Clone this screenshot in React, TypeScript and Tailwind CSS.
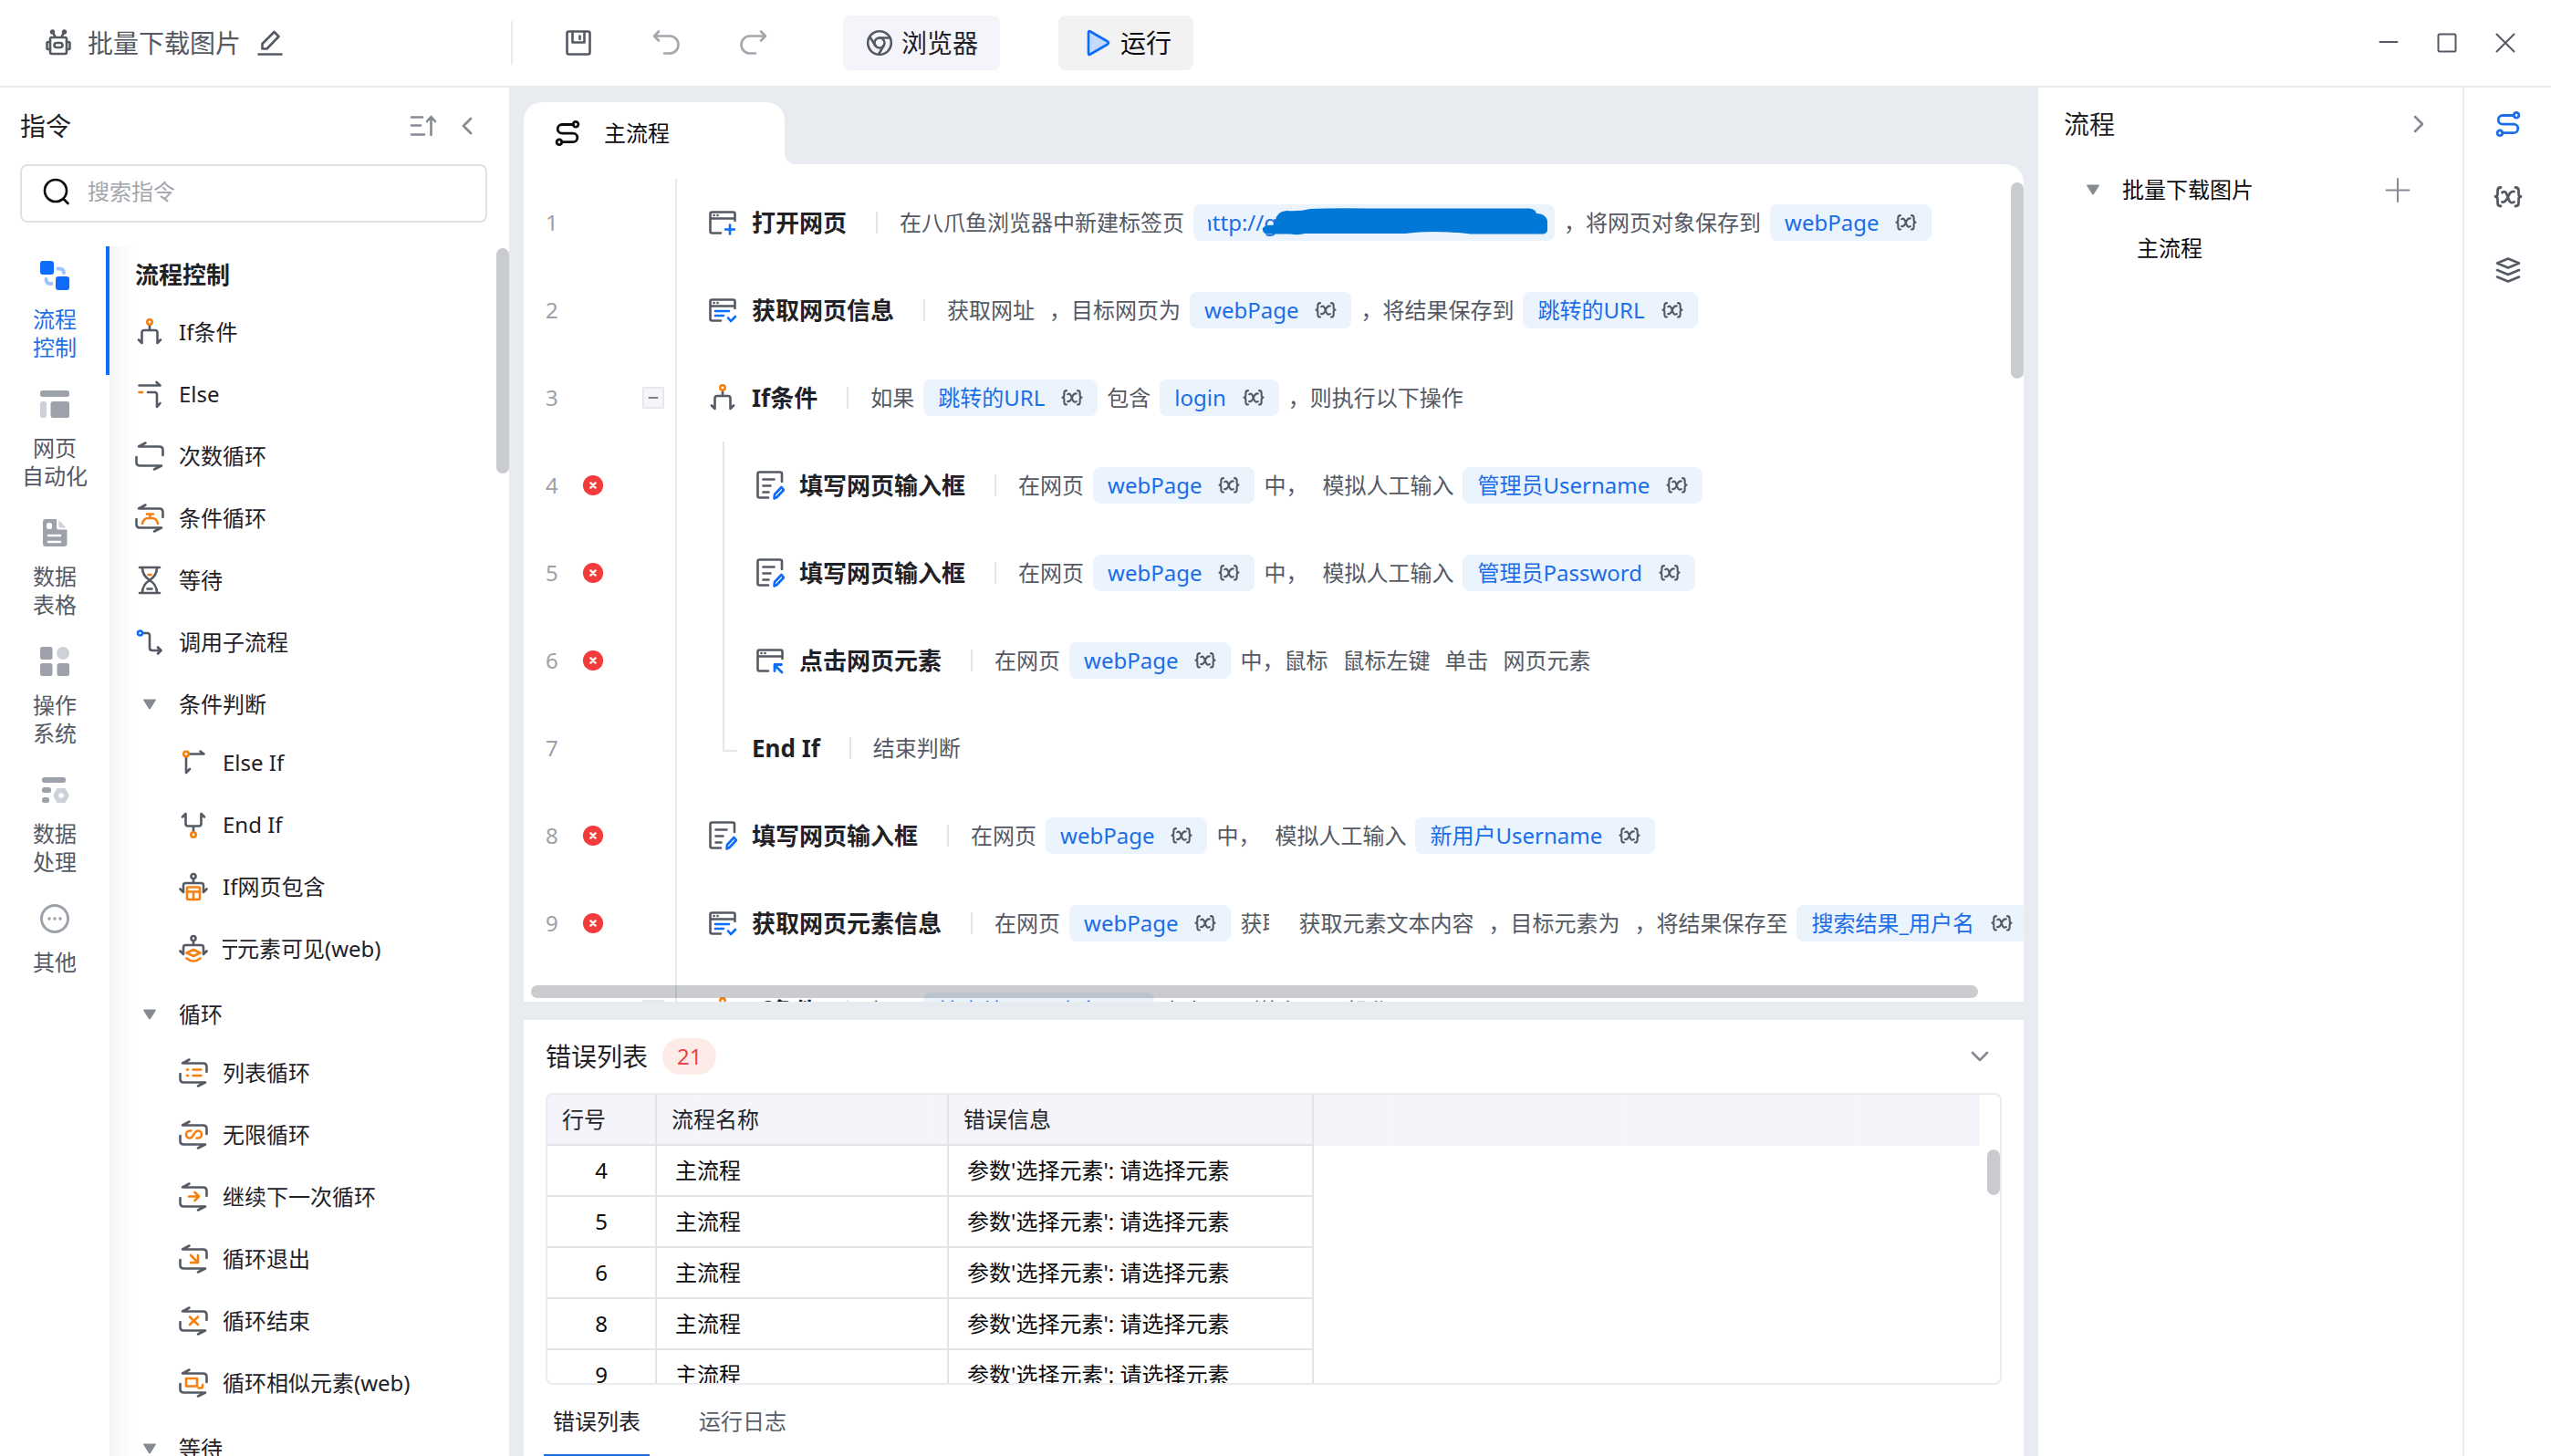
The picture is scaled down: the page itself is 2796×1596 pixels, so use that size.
import type { ReactNode } from 'react';
import { ChevronDown, ChevronLeft, ChevronRight, Minus } from 'lucide-react';

const GREY = '#545964';
const ORANGE = '#f77f0e';
const BLUE = '#0d6cf9';

type IconProps = { className?: string; children?: ReactNode };

function Svg({ className = 'size-8', children }: IconProps) {
  return (
    <svg
      viewBox="0 0 32 32"
      className={`shrink-0 ${className}`}
      fill="none"
      stroke={GREY}
      strokeWidth="2.6"
      strokeLinecap="round"
      strokeLinejoin="round"
      aria-hidden="true"
    >
      {children}
    </svg>
  );
}

/* ---------- header icons ---------- */

const RobotIcon = () => (
  <Svg>
    <rect x="7" y="10" width="18" height="18" rx="2" />
    <rect x="11.5" y="16" width="9" height="5" rx="2.5" />
    <path d="M7 15H4.5q-1 0-1 1v6q0 1 1 1H7M25 15h2.500q1 0 1 1v6q0 1-1 1H25M10 4.500l2.500 5M22 4.500l-2.500 5" />
    <circle cx="9.500" cy="4" r="1.400" fill={GREY} />
    <circle cx="22.500" cy="4" r="1.400" fill={GREY} />
  </Svg>
);

const PencilIcon = () => (
  <Svg>
    <path d="M3.500 28.500h25M7.500 22.500v-5.500L20.500 4l5 5L12.500 22.500z" />
  </Svg>
);

const SaveIcon = () => (
  <Svg>
    <rect x="3.500" y="3.500" width="25" height="25" rx="2" />
    <path d="M9.500 4v11.500h13V4M17.500 8.500v3.500" />
  </Svg>
);

const UndoIcon = () => (
  <Svg className="size-8 text-[#a3a6ad]">
    <path stroke="currentColor" d="M8 3.500L3 8.500l5 5M3.500 8.500H20a9 9 0 0 1 0 19h-6" />
  </Svg>
);

const RedoIcon = () => (
  <Svg className="size-8 text-[#a3a6ad]">
    <path stroke="currentColor" d="M24 3.500l5 5-5 5M28.500 8.500H12a9 9 0 0 0 0 19h6" />
  </Svg>
);

const BrowserIcon = () => (
  <Svg>
    <circle cx="16" cy="16" r="12.800" />
    <circle cx="16" cy="16" r="5.500" />
    <path d="M16 10.500h11.500M11.300 18.800L5.300 9.200M20.700 18.800L15 28.500" />
  </Svg>
);

const PlayIcon = () => (
  <Svg>
    <path d="M5 4.500q0-2 2-1L26 14.500q2 1.500 0 3L7 28.500q-2 1-2-1z" stroke={BLUE} fill="#c3dafd" />
  </Svg>
);

const FlowIcon = ({ color }: { color: string }) => (
  <Svg>
    <g stroke={color} strokeWidth="2.800">
      <path d="M22.500 6.500H10a4.800 4.800 0 0 0 0 9.600h12a4.800 4.800 0 0 1 0 9.600H9.500" />
      <circle cx="25" cy="6.200" r="2.900" />
      <circle cx="7" cy="25.800" r="2.900" />
    </g>
  </Svg>
);

const VarIcon = ({ className = 'size-6' }: IconProps) => (
  <Svg className={className}>
    <g strokeWidth="2.800">
      <path d="M8 5.500Q4.500 5.500 4.500 9v3Q4.500 15.500 2 15.500q2.500 0 2.500 3.500v3.500Q4.500 26 8 26M24 5.500q3.500 0 3.500 3.500v3q0 3.500 2.500 3.500-2.500 0-2.500 3.500v3.500q0 3.500-3.500 3.500" />
      <path d="M9.500 11Q13 8.500 14.500 13l2.500 6.500q1.500 4 5.500 2M22.500 10q-4-1-6.500 5.500T9.500 21.500" />
    </g>
  </Svg>
);

const LayersIcon = () => (
  <Svg>
    <path d="M16 3.500l12 5-12 5-12-5zM4 16l12 5 12-5M4 23.500l12 5 12-5" />
  </Svg>
);

const SortIcon = () => (
  <Svg>
    <path stroke="#868a93" d="M3 6.500h12M3 15.500h10M3 25.500h14M24.500 26V6.500M20 11l4.500-5L29 11" />
  </Svg>
);

/* ---------- command icons ---------- */

const ForkIcon = () => (
  <Svg>
    <path d="M16 9v5M7.500 28V16.500q0-2.500 2.500-2.500h12q2.500 0 2.500 2.500V28M7.500 28L4 24.500M24.500 28l3.500-3.500" />
    <circle cx="16" cy="5" r="2.700" stroke={ORANGE} />
  </Svg>
);

const ElseIcon = () => (
  <Svg>
    <path d="M4.500 6.500H27.500L23.500 3M14 14h7.500q2.500 0 2.500 2.500V30l3.500-4" />
    <path d="M4.500 14h3.500" stroke={ORANGE} />
  </Svg>
);

const LoopIcon = ({ children }: { children?: ReactNode }) => (
  <Svg>
    <path d="M11.500 1.500L4 5.500h22.500q4 0 4 4V15M1.500 17v5.500q0 4 4 4H29l-8 4" />
    <g stroke={ORANGE}>{children}</g>
  </Svg>
);

const WaitIcon = () => (
  <Svg>
    <path d="M5 2h22M5 30h22M8 2q0 9 8 14-8 5-8 14M24 2q0 9-8 14 8 5 8 14M13.500 25.500h5" />
    <path d="M14.500 10h3" stroke={ORANGE} />
  </Svg>
);

const SubflowIcon = () => (
  <Svg>
    <path d="M8.500 6h5q2.500 0 2.500 2.500V22q0 3 3 3h9.500M25 21.500l3.500 3.500-3.500 3.500" />
    <circle cx="5.500" cy="6" r="2.500" stroke={BLUE} />
  </Svg>
);

const ElseIfIcon = () => (
  <Svg>
    <path d="M11 6.500h16.500L23.500 3.500M8 10v17l4-4" />
    <circle cx="8" cy="6.500" r="2.700" stroke={ORANGE} />
  </Svg>
);

const EndIfIcon = () => (
  <Svg>
    <path d="M16 17.500V23M7.500 4v11q0 2.500 2.500 2.500h12q2.500 0 2.500-2.500V4M7.500 4L4 7.500M24.500 4L28 7.500" />
    <circle cx="16" cy="27" r="2.700" stroke={ORANGE} />
  </Svg>
);

const IfBoxIcon = ({ children }: { children: ReactNode }) => (
  <Svg>
    <path d="M16 7.500V12M5 22v-7.500q0-2.500 2.500-2.500h17q2.500 0 2.500 2.500V22M5 22l-3.500-3.500M27 22l3.500-3.500" />
    <circle cx="16" cy="4.500" r="2.500" />
    <g stroke={ORANGE}>{children}</g>
  </Svg>
);

const WindowBase = ({ children }: { children: ReactNode }) => (
  <Svg>
    <path d="M2.500 11.500h27M29.500 14V6.500q0-2-2-2h-23q-2 0-2 2v19q0 2 2 2H14M6.500 8h.1M10.500 8h.1" />
    <g stroke={BLUE}>{children}</g>
  </Svg>
);

const OpenPageIcon = () => (
  <WindowBase>
    <path d="M24 18.500v10M19 23.500h10" />
  </WindowBase>
);

const PageInfoIcon = () => (
  <WindowBase>
    <path d="M8 17h15M8 22h9M22 24.500l3 3.500 5-5" />
  </WindowBase>
);

const ClickIcon = () => (
  <WindowBase>
    <path strokeWidth="2.800" d="M29 29l-7-7M21 27.500v-7h7.500" />
  </WindowBase>
);

const FillIcon = () => (
  <Svg>
    <path d="M29 12V3.500q0-2-2-2H4.500q-2 0-2 2v24q0 2 2 2H14M8.500 9.500h12M8.500 16.500h8M8.500 23.500h6" />
    <path d="M20.500 30.500l.5-4.500 7.500-8 2.500 3-7.500 8z" stroke={BLUE} />
  </Svg>
);

const ErrorIcon = () => (
  <Svg className="size-6">
    <circle cx="16" cy="16" r="14.800" fill="#f23c3c" stroke="none" />
    <path d="M12.500 12.500l7 7M19.500 12.500l-7 7" stroke="#fff" strokeWidth="3" />
  </Svg>
);

const Triangle = () => (
  <svg viewBox="0 0 16 12" className="h-3 w-4 shrink-0" aria-hidden="true">
    <path d="M2 .5h12q1.500 0 .7 1.200L9 10.800q-1 1.200-2 0L1.300 1.700Q.5.500 2 .5z" fill="#868a93" />
  </svg>
);

/* ---------- category rail ---------- */

const railIcons: ReactNode[] = [
  <g fill={BLUE}>
    <rect x="0" y="0" width="15" height="15" rx="3" />
    <rect x="17" y="17" width="15" height="15" rx="3" />
    <path d="M19.500 8.500q6-.5 6.500 4.500M12.500 25q-6 .5-6-5" fill="none" stroke="#9ec4fd" strokeWidth="4" strokeLinecap="round" />
  </g>,
  <g fill="#9da1aa">
    <rect x="0" y="1" width="32" height="7" rx="2.500" />
    <rect x="0" y="13" width="7" height="18" rx="2.500" fill="#cfd1d9" />
    <rect x="11.500" y="13" width="20.500" height="18" rx="2.500" />
  </g>,
  <g fill="#9da1aa">
    <path d="M6 1h12v9q0 2.500 2.500 2.500h9V28q0 3-3 3H6q-3 0-3-3V4q0-3 3-3z" />
    <path d="M20.500 2l8 8.500h-6q-2 0-2-2z" fill="#cfd1d9" />
    <path d="M9 19h13M9 26h13" stroke="#fff" strokeWidth="2.600" strokeLinecap="round" />
    <rect x="7" y="5" width="6" height="7" rx="2.500" fill="#fff" />
  </g>,
  <g fill="#9da1aa">
    <rect x="0" y="0" width="13.500" height="14" rx="2.500" />
    <circle cx="25" cy="7" r="7" fill="#cfd1d9" />
    <rect x="0" y="18" width="13.500" height="14" rx="2.500" />
    <rect x="18.500" y="18" width="13.500" height="14" rx="2.500" />
  </g>,
  <g fill="#9da1aa">
    <rect x="2" y="2" width="26" height="6" rx="2.500" />
    <rect x="2" y="13" width="10" height="6" rx="2.500" />
    <rect x="2" y="24" width="8" height="6" rx="2.500" />
    <path d="M18.500 14h9l4.500 8-4.500 8h-9L14 22zM23 19.200a2.800 2.800 0 1 0 .01 0z" fill="#cfd1d9" fillRule="evenodd" />
  </g>,
  <g fill="#9da1aa">
    <circle cx="16" cy="16" r="14.500" fill="none" stroke="#9da1aa" strokeWidth="3" />
    <circle cx="10" cy="16" r="1.800" />
    <circle cx="16" cy="16" r="1.800" />
    <circle cx="22" cy="16" r="1.800" />
  </g>,
];

const railLabels = [['流程', '控制'], ['网页', '自动化'], ['数据', '表格'], ['操作', '系统'], ['数据', '处理'], ['其他']];

function CategoryRail() {
  return (
    <nav className="flex w-[120px] shrink-0 flex-col">
      {railLabels.map((lines, i) => (
        <button
          key={i}
          className={`flex h-[141px] shrink-0 flex-col items-center gap-4 border-r-4 pl-1 pt-4 leading-[31px] ${
            i === 0 ? 'border-[#0d6cf9] text-[#1e6fe8]' : 'border-transparent text-[#545964]'
          }`}
        >
          <svg viewBox="0 0 32 32" className="size-8 shrink-0" aria-hidden="true">
            {railIcons[i]}
          </svg>
          <span className="flex flex-col">
            {lines.map((line) => (
              <span key={line}>{line}</span>
            ))}
          </span>
        </button>
      ))}
    </nav>
  );
}

/* ---------- command list ---------- */

type Command = { label: ReactNode; icon: ReactNode };

const topCommands: Command[] = [
  { label: 'If条件', icon: <ForkIcon /> },
  { label: 'Else', icon: <ElseIcon /> },
  { label: '次数循环', icon: <LoopIcon /> },
  {
    label: '条件循环',
    icon: (
      <LoopIcon>
        <path d="M13 11.500h7M16.500 12v4M8 22q1.500-6 6-6h5q4.500 0 6 6" />
      </LoopIcon>
    ),
  },
  { label: '等待', icon: <WaitIcon /> },
  { label: '调用子流程', icon: <SubflowIcon /> },
];

const groups: { title: string; items: Command[] }[] = [
  {
    title: '条件判断',
    items: [
      { label: 'Else If', icon: <ElseIfIcon /> },
      { label: 'End If', icon: <EndIfIcon /> },
      {
        label: 'If网页包含',
        icon: (
          <IfBoxIcon>
            <rect x="9" y="16.500" width="14" height="13.500" rx="1" fill="#fff" />
            <path d="M9 21.500h14M16 21.500V30" />
          </IfBoxIcon>
        ),
      },
      {
        label: (
          <>
            <span className="flex w-4 justify-center overflow-hidden">亍</span>元素可见(web)
          </>
        ),
        icon: (
          <IfBoxIcon>
            <path d="M16 17l7.500 3.500L16 24l-7.500-3.500zM8.500 26.500q7.500 6 15 0" fill="#fff" />
          </IfBoxIcon>
        ),
      },
    ],
  },
  {
    title: '循环',
    items: [
      {
        label: '列表循环',
        icon: (
          <LoopIcon>
            <path d="M9 12.500h1M15.500 12.500h9M9 19h1M15.500 19h9" />
          </LoopIcon>
        ),
      },
      {
        label: '无限循环',
        icon: (
          <LoopIcon>
            <path d="M13.500 11.500H12a4 4 0 0 0 0 8q2.500 0 4.500-4t4.500-4a4 4 0 0 1 0 8h-1.500" />
          </LoopIcon>
        ),
      },
      {
        label: '继续下一次循环',
        icon: (
          <LoopIcon>
            <path d="M11 15.500h11M17.500 11l4.500 4.500-4.500 4.500" />
          </LoopIcon>
        ),
      },
      {
        label: '循环退出',
        icon: (
          <LoopIcon>
            <path d="M13 12l7.500 7.500M21 12v8h-8" />
          </LoopIcon>
        ),
      },
      {
        label: '循环结束',
        icon: (
          <LoopIcon>
            <path d="M12 11.500l9 8.500M21 11.500L12 20" />
          </LoopIcon>
        ),
      },
      {
        label: '循环相似元素(web)',
        icon: (
          <LoopIcon>
            <rect x="8" y="11" width="12" height="8.500" />
            <path d="M26 18v1.500q0 2-2 2h-2.500" />
          </LoopIcon>
        ),
      },
    ],
  },
  { title: '等待', items: [] },
];

function CommandItem({ label, icon }: Command) {
  return (
    <li>
      <button className="flex h-[68px] w-full items-center gap-4">
        {icon}
        <span className="flex">{label}</span>
      </button>
    </li>
  );
}

function CommandList() {
  return (
    <div className="relative min-w-0 flex-1 overflow-hidden bg-linear-to-r from-[#f5f5f6] to-white to-6% pl-7">
      <h3 className="h-[60px] text-[26px] font-bold leading-[62px]">流程控制</h3>
      <ul>
        {topCommands.map((c, i) => (
          <CommandItem key={i} {...c} />
        ))}
      </ul>
      {groups.map((g) => (
        <section key={g.title}>
          <button className="flex h-[68px] w-full items-center gap-6 pl-2">
            <Triangle />
            {g.title}
          </button>
          <ul className="-mt-1 mb-1 pl-12">
            {g.items.map((c, i) => (
              <CommandItem key={i} {...c} />
            ))}
          </ul>
        </section>
      ))}
      <div className="absolute right-0 top-0.5 h-[247px] w-3.5 rounded-full bg-[#c9cbd1]" />
    </div>
  );
}

function LeftPanel() {
  return (
    <aside className="flex w-[558px] shrink-0 flex-col bg-white">
      <div className="flex h-[84px] shrink-0 items-center pl-[22px] pr-[30px]">
        <h2 className="flex-1 text-[28px]">指令</h2>
        <button aria-label="排序" className="mr-4">
          <SortIcon />
        </button>
        <button aria-label="收起">
          <ChevronLeft className="size-8 text-[#868a93]" strokeWidth={2} />
        </button>
      </div>
      <label className="mb-[26px] ml-[22px] mr-6 flex h-16 shrink-0 items-center gap-[18px] rounded-lg border-2 border-[#e0e1e4] pb-1 pl-[22px] pr-4">
        <Svg>
          <circle cx="15" cy="15" r="12" stroke="#0b0b0d" />
          <path d="M23.500 24l5 5" stroke="#0b0b0d" />
        </Svg>
        <input
          type="text"
          aria-label="搜索指令"
          placeholder="搜索指令"
          className="min-w-0 flex-1 outline-none placeholder:text-[#a3a6ad]"
        />
      </label>
      <div className="flex min-h-0 flex-1 overflow-hidden">
        <CategoryRail />
        <CommandList />
      </div>
    </aside>
  );
}

/* ---------- flow editor ---------- */

function Chip({ children }: { children: ReactNode }) {
  return (
    <button className="flex h-10 shrink-0 items-center gap-[18px] rounded-lg bg-[#ebf3fd] px-4 text-[#1a6ee8]">
      {children}
      <VarIcon />
    </button>
  );
}

function UrlChip() {
  return (
    <button className="relative h-10 w-[396px] shrink-0 rounded-lg bg-[#ebf3fd] px-4 text-left leading-10 text-[#1a6ee8]">
      <span className="block overflow-hidden">
        <span className="-ml-2.5">http://g</span>
      </span>
      <svg viewBox="0 0 320 32" className="absolute left-[72px] top-1 h-8 w-80" aria-hidden="true">
        <path
          d="M18 14Q19 4 30 3Q44 4 56 1Q80 0 120 0.500H296Q303 1 304 6Q314 6 316 14V25Q315 29 308 28.500H232Q190 24 160 28H50Q44 30 34 28.500L8 28.500Q3 27 4 22Q8 18 15 19Z"
          fill="#0078d7"
        />
      </svg>
    </button>
  );
}

type StepProps = {
  no: number;
  title: string;
  icon?: ReactNode;
  error?: boolean;
  fold?: boolean;
  nested?: boolean;
  children: ReactNode;
};

function Step({ no, title, icon, error, fold, nested, children }: StepProps) {
  return (
    <li className="flex h-24 shrink-0 whitespace-nowrap">
      <div className="flex w-[168px] shrink-0 items-center border-r-2 border-[#e7e8eb] pl-6">
        <span className="w-10 text-[#9da0a8]">{no}</span>
        <span className="w-6">{error && <ErrorIcon />}</span>
        {fold && (
          <button
            aria-label="折叠"
            className="ml-[42px] flex size-6 items-center justify-center border-2 border-[#e7e8ee] bg-[#f5f5fa]"
          >
            <Minus className="size-4 text-[#545964]" strokeWidth={2.5} />
          </button>
        )}
      </div>
      <div className={`flex items-center ${nested ? 'pl-[86px]' : icon ? 'pl-[34px]' : 'pl-[82px]'}`}>
        {icon}
        <span className={`text-[26px] font-bold text-[#1f2126] ${icon ? 'ml-4' : ''}`}>{title}</span>
        <span className="ml-8 mr-6 h-6 w-0.5 bg-[#e4e6e9]" />
        <span className="flex items-center gap-2.5 text-[#545964]">{children}</span>
      </div>
    </li>
  );
}

function FillStep({ no, target, nested }: { no: number; target: string; nested?: boolean }) {
  return (
    <Step no={no} title="填写网页输入框" icon={<FillIcon />} error nested={nested}>
      <span>在网页</span>
      <Chip>webPage</Chip>
      <span>中，</span>
      <span className="ml-1.5">模拟人工输入</span>
      <Chip>{target}</Chip>
    </Step>
  );
}

function Editor() {
  return (
    <section className="relative min-h-0 flex-1 overflow-hidden rounded-tr-[20px] bg-white pt-4">
      <ol className="flex flex-col">
        <Step no={1} title="打开网页" icon={<OpenPageIcon />}>
          <span>在八爪鱼浏览器中新建标签页</span>
          <UrlChip />
          <span>，将网页对象保存到</span>
          <Chip>webPage</Chip>
        </Step>
        <Step no={2} title="获取网页信息" icon={<PageInfoIcon />}>
          <span>获取网址</span>
          <span className="ml-1.5">，目标网页为</span>
          <Chip>webPage</Chip>
          <span>，将结果保存到</span>
          <Chip>跳转的URL</Chip>
        </Step>
        <Step no={3} title="If条件" icon={<ForkIcon />} fold>
          <span>如果</span>
          <Chip>跳转的URL</Chip>
          <span>包含</span>
          <Chip>login</Chip>
          <span>，则执行以下操作</span>
        </Step>
        <FillStep no={4} target="管理员Username" nested />
        <FillStep no={5} target="管理员Password" nested />
        <Step no={6} title="点击网页元素" icon={<ClickIcon />} error nested>
          <span>在网页</span>
          <Chip>webPage</Chip>
          <span>中，鼠标</span>
          <span className="ml-1.5">鼠标左键</span>
          <span className="ml-1.5">单击</span>
          <span className="ml-1.5">网页元素</span>
        </Step>
        <Step no={7} title="End If">
          <span>结束判断</span>
        </Step>
        <FillStep no={8} target="新用户Username" />
        <Step no={9} title="获取网页元素信息" icon={<PageInfoIcon />} error>
          <span>在网页</span>
          <Chip>webPage</Chip>
          <span className="w-8 overflow-hidden">获取</span>
          <span className="ml-[22px]">获取元素文本内容</span>
          <span className="ml-1.5">，目标元素为</span>
          <span className="ml-1.5">，将结果保存至</span>
          <Chip>搜索结果_用户名</Chip>
        </Step>
        <Step no={10} title="If条件" icon={<ForkIcon />} fold>
          <span>如果</span>
          <Chip>搜索结果_用户名</Chip>
          <span>存在</span>
          <span>，则执行以下操作</span>
        </Step>
      </ol>
      {/* bracket that joins If条件 with its End If */}
      <div className="absolute left-[218px] top-[304px] h-[340px] w-4 border-b-2 border-l-2 border-[#e4e6e9]" />
      <div className="absolute right-0 top-5 h-[215px] w-3.5 rounded-full bg-[#c9cbd1]" />
      <div className="absolute bottom-1 left-2 right-[50px] h-3.5 rounded-full bg-[#0f1525]/22" />
    </section>
  );
}

/* ---------- error list ---------- */

const errors = [4, 5, 6, 8, 9];

function ErrorPanel() {
  return (
    <section className="mt-5 shrink-0 bg-white">
      <div className="flex h-20 items-center gap-4 pl-6 pr-8">
        <h2 className="text-[28px]">错误列表</h2>
        <span className="rounded-full bg-[#fdebe8] px-4 leading-10 text-[#ea4448]">21</span>
        <button aria-label="收起" className="ml-auto">
          <ChevronDown className="size-8 text-[#868a93]" strokeWidth={2} />
        </button>
      </div>
      <div className="relative mx-6 h-80 overflow-hidden rounded-lg border-2 border-[#ebecef]">
        <div className="mr-[22px] bg-linear-to-b from-[#f4f4fa] from-[56px] to-white to-[56px]">
          <table className="w-[840px] table-fixed border-separate border-spacing-0 text-[#0c0c0e]">
            <thead>
              <tr className="h-14 text-left text-[#22242a]">
                <th className="w-[120px] border-b-2 border-r-2 border-[#e2e4e8] pl-4 font-normal">行号</th>
                <th className="w-[320px] border-b-2 border-r-2 border-[#e2e4e8] pl-4 font-normal">流程名称</th>
                <th className="border-b-2 border-r-2 border-[#e2e4e8] pl-4 font-normal">错误信息</th>
              </tr>
            </thead>
            <tbody>
              {errors.map((n) => (
                <tr key={n} className="h-14">
                  <td className="border-b-2 border-r-2 border-[#e2e4e8] text-center">{n}</td>
                  <td className="border-b-2 border-r-2 border-[#e2e4e8] pl-5">主流程</td>
                  <td className="border-b-2 border-r-2 border-[#e2e4e8] pl-5">参数'选择元素': 请选择元素</td>
                </tr>
              ))}
            </tbody>
          </table>
        </div>
        <div className="absolute right-0 top-[60px] h-[50px] w-3.5 rounded-full bg-[#c9cbd1]" />
      </div>
      <div className="flex h-[78px] gap-11 pl-[22px]">
        <button className="border-b-2 border-[#1a6ee8] px-2.5 pt-1">错误列表</button>
        <button className="border-b-2 border-transparent px-2.5 pt-1 text-[#5a5f6b]">运行日志</button>
      </div>
    </section>
  );
}

/* ---------- right side ---------- */

function RightPanel() {
  return (
    <aside className="flex w-[562px] shrink-0 bg-white">
      <div className="flex-1 pt-2">
        <div className="flex h-16 items-center justify-between pl-7 pr-8">
          <h2 className="text-[28px]">流程</h2>
          <button aria-label="收起">
            <ChevronRight className="size-8 text-[#868a93]" strokeWidth={2} />
          </button>
        </div>
        <div className="mt-2 flex h-16 items-center pl-[52px] pr-14 text-[#0c0c0e]">
          <Triangle />
          <span className="ml-6 flex-1">批量下载图片</span>
          <button aria-label="新建流程">
            <Svg>
              <path stroke="#868a93" strokeWidth="2" d="M17 4v25M4.500 16.500h25" />
            </Svg>
          </button>
        </div>
        <button className="block h-16 pl-[108px] text-[#0c0c0e]">主流程</button>
      </div>
      <div className="flex w-[97px] flex-col items-center gap-12 border-l-2 border-[#ebecf0] pt-6">
        <button aria-label="流程">
          <FlowIcon color="#1a6ee8" />
        </button>
        <button aria-label="变量">
          <VarIcon className="size-8" />
        </button>
        <button aria-label="元素库">
          <LayersIcon />
        </button>
      </div>
    </aside>
  );
}

function Header() {
  return (
    <header className="flex h-24 shrink-0 items-center border-b-2 border-[#e8ebf0] bg-white text-[28px]">
      <div className="flex w-[560px] shrink-0 items-center gap-4 pl-12">
        <RobotIcon />
        <h1 className="text-[#545964]">批量下载图片</h1>
        <button aria-label="重命名">
          <PencilIcon />
        </button>
      </div>
      <div className="h-12 w-0.5 bg-[#e8eaee]" />
      <div className="ml-14 flex gap-16">
        <button aria-label="保存">
          <SaveIcon />
        </button>
        <button aria-label="撤销">
          <UndoIcon />
        </button>
        <button aria-label="重做">
          <RedoIcon />
        </button>
      </div>
      <button className="ml-[82px] flex h-[60px] items-center gap-2 rounded-lg bg-[#f4f4fa] px-6">
        <BrowserIcon />
        浏览器
      </button>
      <button className="ml-16 flex h-[60px] items-center gap-2 rounded-lg bg-[#f2f2f3] pl-7 pr-6 text-[#0c0c0e]">
        <PlayIcon />
        运行
      </button>
      <div className="ml-auto mr-[34px] flex gap-8">
        <button aria-label="最小化">
          <Svg>
            <path strokeWidth="2" d="M6.500 15h19" />
          </Svg>
        </button>
        <button aria-label="最大化">
          <Svg>
            <rect x="6.500" y="6.500" width="19" height="19" rx="1.500" strokeWidth="2" />
          </Svg>
        </button>
        <button aria-label="关闭">
          <Svg>
            <path strokeWidth="2" d="M6.500 6.500l19 19M25.500 6.500l-19 19" />
          </Svg>
        </button>
      </div>
    </header>
  );
}

export default function App() {
  return (
    <div className="flex h-screen flex-col overflow-hidden bg-[#e8ebf0] font-['Noto_Sans','Noto_Sans_CJK_SC',sans-serif] text-2xl leading-8 text-[#1f2126]">
      <Header />
      <div className="flex min-h-0 flex-1">
        <LeftPanel />
        <main className="mx-4 flex min-w-0 flex-1 flex-col pt-4">
          <div className="flex h-[68px] shrink-0">
            <button className="flex w-[286px] items-center gap-6 rounded-t-[20px] bg-white pl-8 text-[#0c0c0e]">
              <FlowIcon color="#0c0c0e" />
              主流程
            </button>
            <div className="size-3 self-end bg-white">
              <div className="size-full rounded-bl-[12px] bg-[#e8ebf0]" />
            </div>
          </div>
          <Editor />
          <ErrorPanel />
        </main>
        <RightPanel />
      </div>
    </div>
  );
}
